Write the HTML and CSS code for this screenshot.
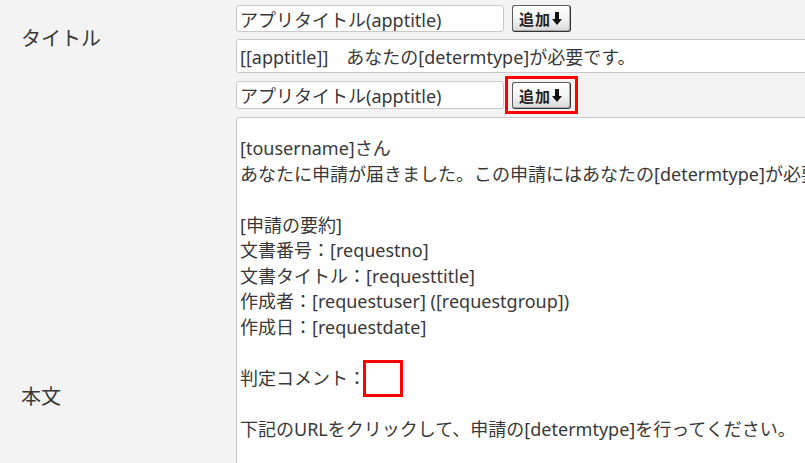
FILE: index.html
```html
<!DOCTYPE html>
<html lang="ja">
<head>
    <meta charset="utf-8">
    <title>通知テンプレート</title>
    <link rel="stylesheet" href="styles.css">
</head>
<body>
    <div class="form">
        <div class="row">
            <div class="label">タイトル</div>
            <div class="field">
                <div class="line">
                    <input type="text" class="input-short" value="アプリタイトル(apptitle)">
                    <button type="button" class="add-btn">追加<svg width="10" height="13" viewBox="0 0 10 13"><path d="M3 0h4v7h3l-5 6-5-6h3z"/></svg></button>
                </div>
                <input type="text" class="input-long" value="[[apptitle]]　あなたの[determtype]が必要です。">
            </div>
        </div>
        <div class="row">
            <div class="label"></div>
            <div class="field">
                <div class="line">
                    <input type="text" class="input-short" value="アプリタイトル(apptitle)">
                    <span class="mark">
                        <button type="button" class="add-btn">追加<svg width="10" height="13" viewBox="0 0 10 13"><path d="M3 0h4v7h3l-5 6-5-6h3z"/></svg></button>
                    </span>
                </div>
            </div>
        </div>
        <div class="row row-body">
            <div class="label">本文</div>
            <div class="field">
                <div class="body-wrap">
                    <textarea class="body-text" wrap="off">[tousername]さん
あなたに申請が届きました。この申請にはあなたの[determtype]が必要です。

[申請の要約]
文書番号：[requestno]
文書タイトル：[requesttitle]
作成者：[requestuser] ([requestgroup])
作成日：[requestdate]

判定コメント：

下記のURLをクリックして、申請の[determtype]を行ってください。

[url]</textarea>
                    <!-- highlight where the comment goes -->
                    <span class="comment-mark"></span>
                </div>
            </div>
        </div>
    </div>
</body>
</html>
```

FILE: styles.css
```css
html, body {
    overflow: hidden;
}

body {
    margin: 0;
    padding: 0;
    background-color: #f3f3f3;
    color: #383838;
    font-family: "Noto Sans", "Noto Sans CJK JP", sans-serif;
}

.form {
    display: grid;
    row-gap: 8px;
    padding-top: 5px;
    width: 1000px;
}

.row {
    display: grid;
    grid-template-columns: 236px 1fr;
    align-items: center;
}

.label {
    padding-left: 21px;
    font-size: 20px;
    padding-bottom: 4px;
}

.field {
    display: flex;
    flex-direction: column;
    gap: 7px;
}

.line {
    display: flex;
    align-items: center;
}

input {
    font-family: "Noto Sans", "Noto Sans CJK JP", sans-serif;
    font-size: 18px;
    color: #383838;
    background-color: #fff;
    border: 1px solid #c9c9c9;
    border-radius: 3px;
    padding: 0 3px;
    margin: 0;
    box-sizing: border-box;
    outline: none;
}

.input-short {
    width: 268px;
    height: 27px;
}

.input-long {
    width: 700px;
    height: 34px;
}

.row:nth-child(2) .input-short {
    height: 28px;
}

.add-btn {
    display: flex;
    align-items: center;
    gap: 1px;
    margin-left: 8px;
    width: 59px;
    height: 27px;
    padding: 0 0 0 6px;
    box-sizing: border-box;
    border: 1px solid #5a5a5a;
    border-right-color: #333;
    border-bottom-color: #333;
    border-radius: 3px;
    background: linear-gradient(#ffffff, #f4f4f4 50%, #d9d9d9);
    box-shadow: inset -1px -1px 0 #a8a8a8;
    font-family: "Noto Sans CJK JP", sans-serif;
    font-size: 15px;
    font-weight: bold;
    color: #222;
    letter-spacing: 1px;
}

.add-btn svg {
    fill: #111;
}

.mark {
    position: relative;
    display: flex;
}

.mark::after {
    content: "";
    position: absolute;
    left: 1px;
    right: -7px;
    top: -6px;
    bottom: -5px;
    border: 3px solid #f00;
}

.row-body .label {
    padding-bottom: 0;
}

.body-wrap {
    position: relative;
}

.body-text {
    display: block;
    width: 700px;
    height: 556px;
    margin: 0;
    padding: 18px 3px 0;
    box-sizing: border-box;
    border: 1px solid #c9c9c9;
    border-radius: 3px;
    background-color: #fff;
    color: #383838;
    font-family: "Noto Sans", "Noto Sans CJK JP", sans-serif;
    font-size: 18px;
    line-height: 25.5px;
    resize: none;
    outline: none;
    overflow: hidden;
}

.comment-mark {
    position: absolute;
    left: 127px;
    top: 243px;
    width: 34px;
    height: 31px;
    border: 3px solid #f00;
}
```
